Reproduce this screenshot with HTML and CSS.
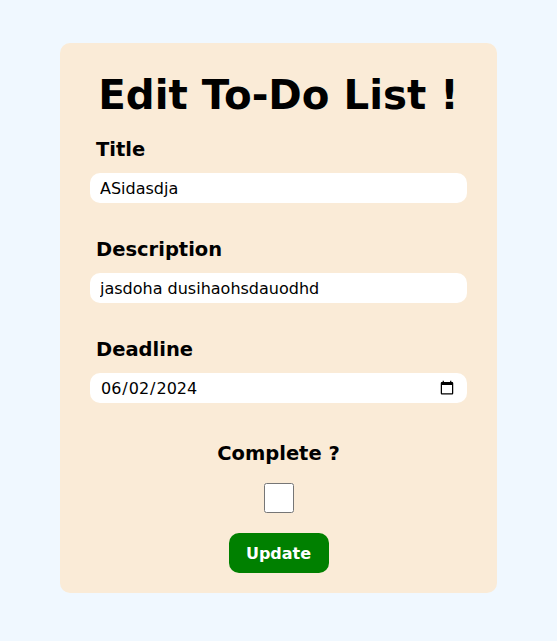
FILE: index.html
```html
<!DOCTYPE html>
<html lang="en">
<head>
<meta charset="utf-8">
<title>Edit To-Do List</title>
<link rel="stylesheet" href="styles.css">
</head>
<body>
<form class="card">
  <h1 class="heading">Edit To-Do List !</h1>
  <label class="field-label" for="title">Title</label>
  <input class="field" id="title" type="text" value="ASidasdja">
  <label class="field-label gap" for="desc">Description</label>
  <input class="field" id="desc" type="text" value="jasdoha dusihaohsdauodhd">
  <label class="field-label gap" for="deadline">Deadline</label>
  <input class="field" id="deadline" type="date" value="2024-06-02">
  <label class="complete-label" for="complete">Complete ?</label>
  <input class="check" id="complete" type="checkbox">
  <button class="update" type="button">Update</button>
</form>
</body>
</html>
```
FILE: styles.css
```css
html, body {
  margin: 0;
  padding: 0;
  background: #f0f8ff;
  font-family: "DejaVu Sans", Verdana, sans-serif;
}
.card {
  box-sizing: border-box;
  width: 437px;
  margin: 43px auto 0;
  padding: 27px 30px 20px;
  background: #faebd7;
  border-radius: 10px;
  display: flex;
  flex-direction: column;
}
.heading {
  margin: 0;
  text-align: center;
  white-space: nowrap;
  font-size: 40.3px;
  line-height: 51px;
  font-weight: bold;
  color: #000;
}
.field-label {
  display: block;
  margin: 17px 0 11px 6px;
  font-size: 19.5px;
  line-height: 24px;
  font-weight: bold;
}
.field-label.gap {
  margin-top: 35px;
}
.field {
  box-sizing: border-box;
  width: 100%;
  height: 30px;
  border: none;
  border-radius: 10px;
  padding: 0 10px;
  background: #fff;
  font-family: "DejaVu Sans", Verdana, sans-serif;
  font-size: 16px;
  color: #000;
  outline: none;
}
.complete-label {
  display: block;
  margin-top: 39px;
  text-align: center;
  font-size: 19.5px;
  line-height: 24px;
  font-weight: bold;
}
.check {
  align-self: center;
  width: 30px;
  height: 30px;
  margin: 17px 0 0;
}
.update {
  align-self: center;
  width: 100px;
  height: 40px;
  margin-top: 20px;
  border: none;
  border-radius: 10px;
  background: #008000;
  color: #fff;
  font-family: "DejaVu Sans", Verdana, sans-serif;
  font-size: 16px;
  font-weight: bold;
}
```
